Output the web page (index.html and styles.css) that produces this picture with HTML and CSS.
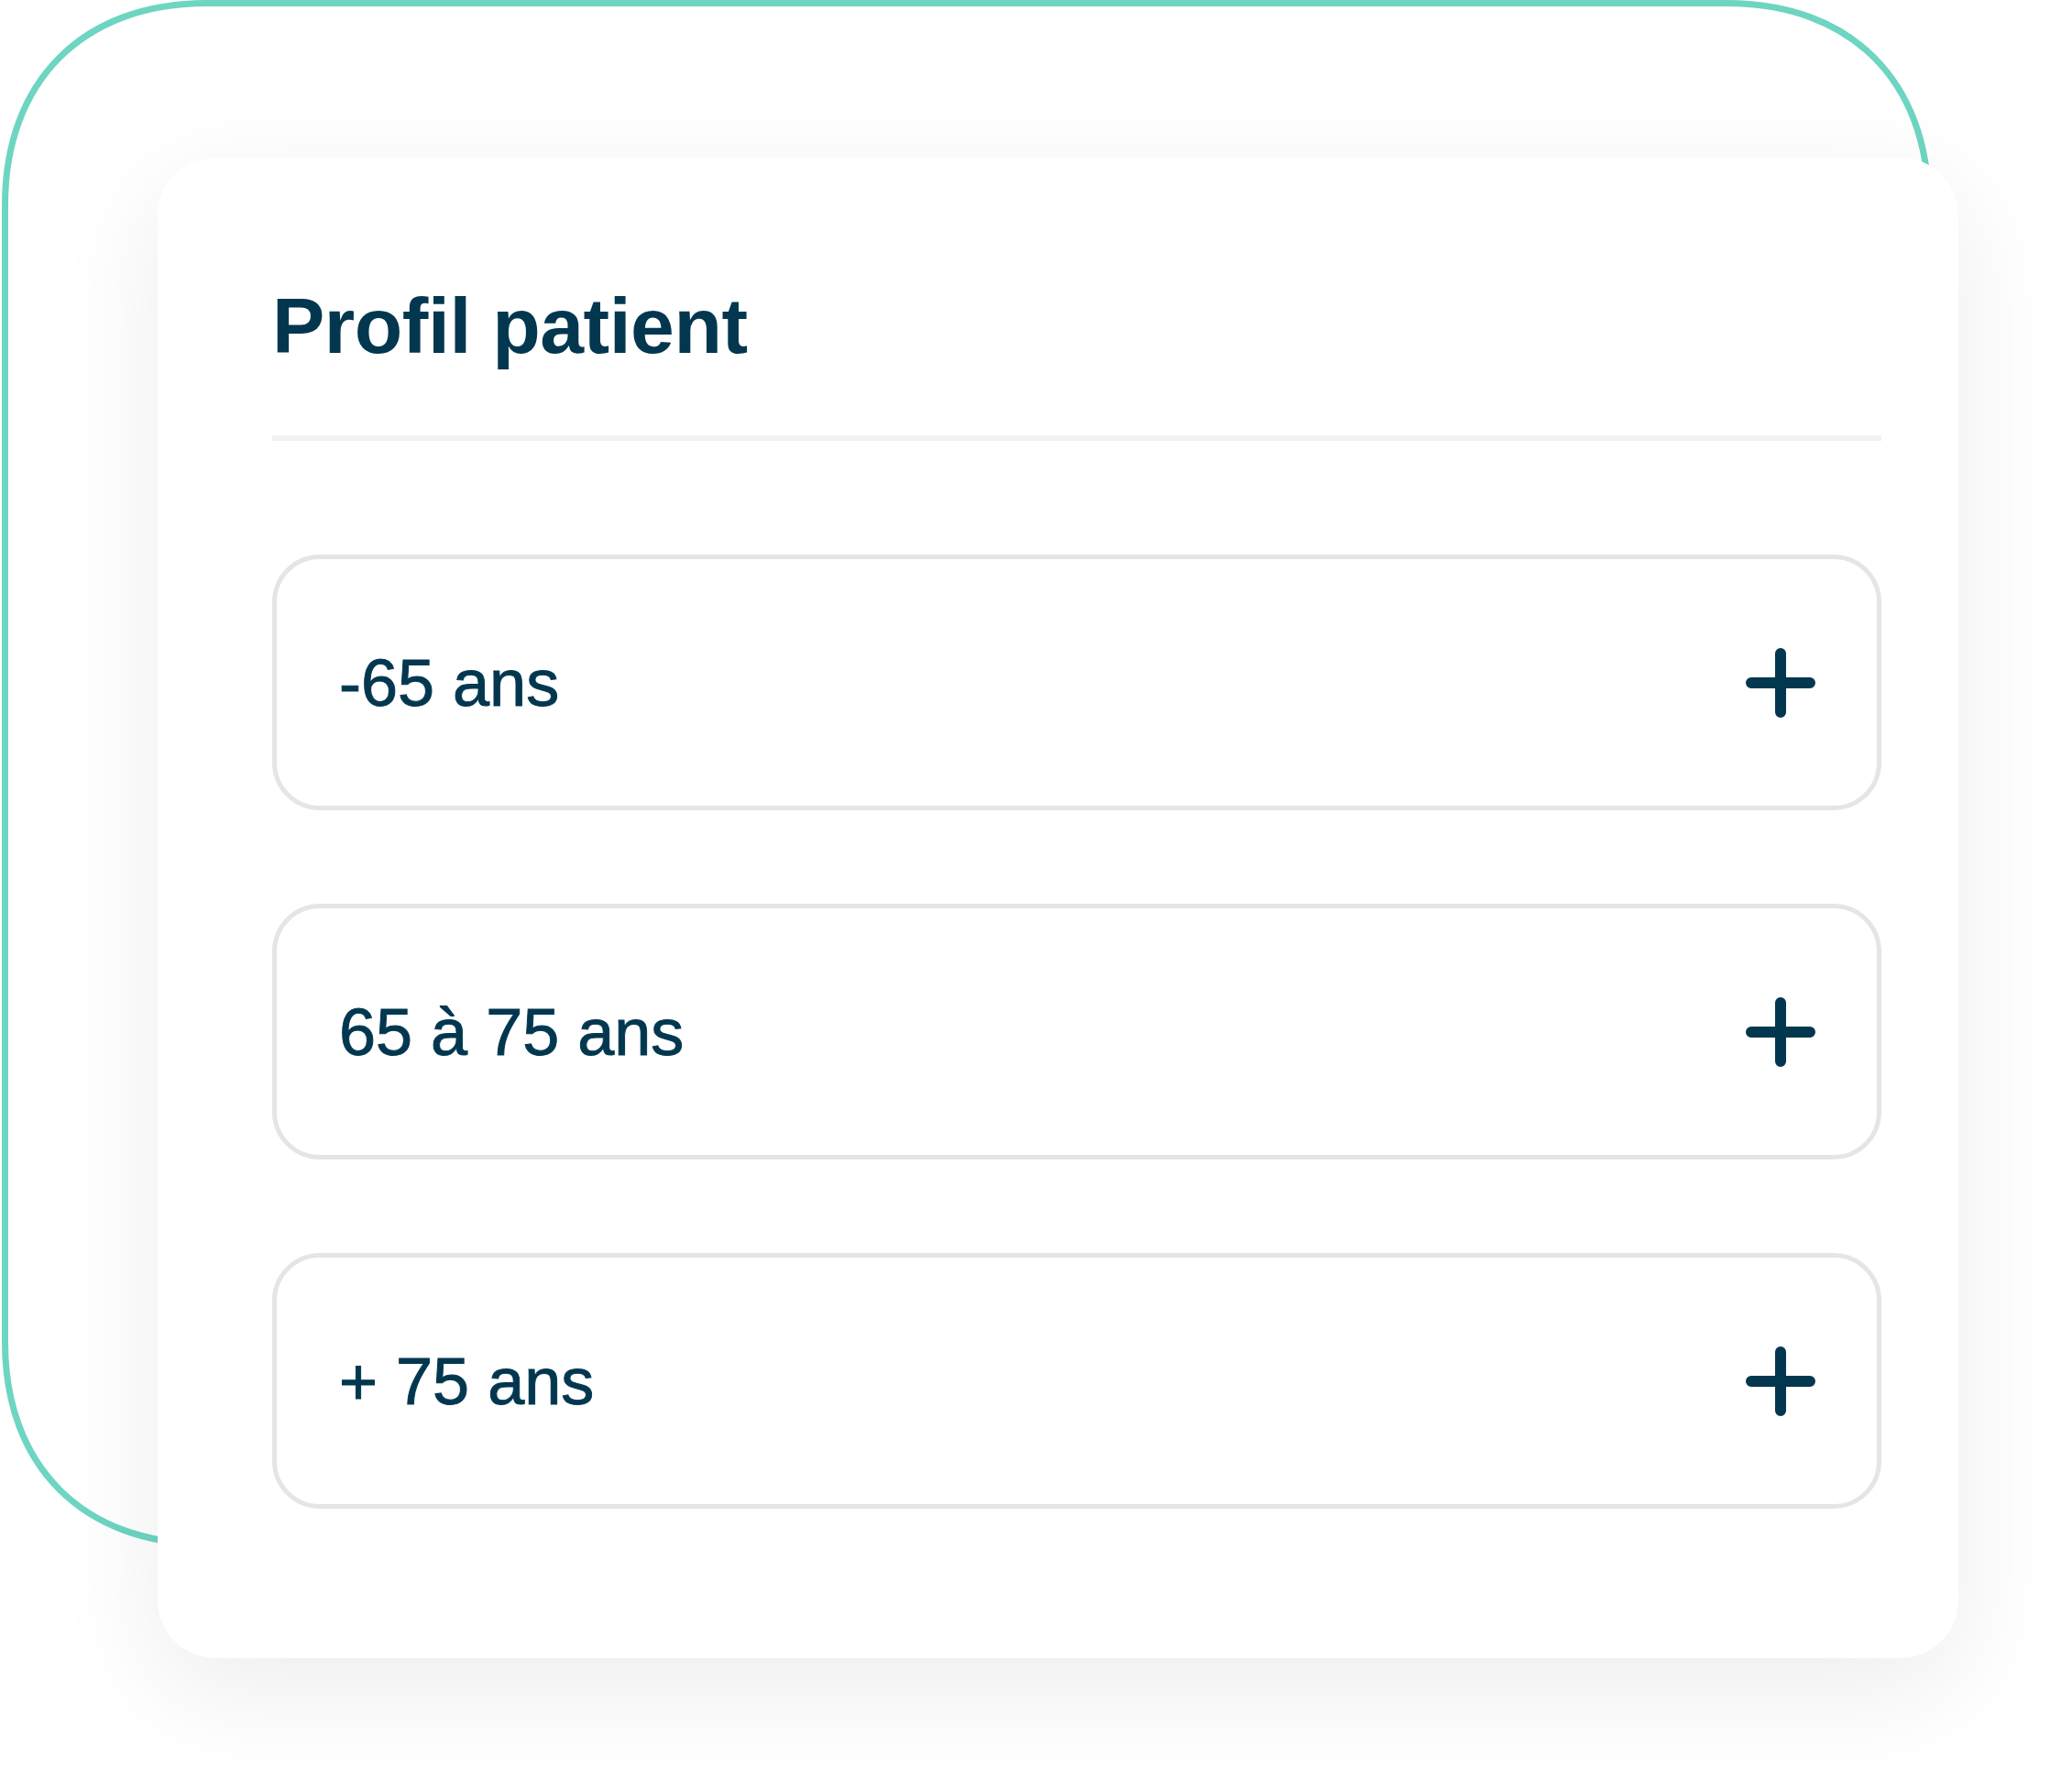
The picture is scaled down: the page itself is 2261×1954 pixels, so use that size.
FILE: index.html
```html
<!DOCTYPE html>
<html lang="fr">
<head>
<meta charset="utf-8">
<title>Profil patient</title>
<link rel="stylesheet" href="styles.css">
</head>
<body>
<div class="stage">
  <svg class="frame" viewBox="0 0 2106 1688" width="2106" height="1688" aria-hidden="true">
    <path d="M223.5 3.5H1882.5C2017.5 3.5 2102.5 88.5 2102.5 223.5V1464.5C2102.5 1599.5 2017.5 1684.5 1882.5 1684.5H223.5C88.5 1684.5 3.5 1599.5 3.5 1464.5V223.5C3.5 88.5 88.5 3.5 223.5 3.5Z"/>
  </svg>
  <section class="card">
    <h2 class="title">Profil patient</h2>
    <div class="divider"></div>
    <ul class="options">
      <li class="option">
        <span class="label">-65 ans</span>
        <svg class="plus" viewBox="0 0 76 76" width="76" height="76" aria-hidden="true"><path d="M38 6V70M6 38H70"/></svg>
      </li>
      <li class="option">
        <span class="label">65 à 75 ans</span>
        <svg class="plus" viewBox="0 0 76 76" width="76" height="76" aria-hidden="true"><path d="M38 6V70M6 38H70"/></svg>
      </li>
      <li class="option">
        <span class="label">+ 75 ans</span>
        <svg class="plus" viewBox="0 0 76 76" width="76" height="76" aria-hidden="true"><path d="M38 6V70M6 38H70"/></svg>
      </li>
    </ul>
  </section>
</div>
</body>
</html>
```

FILE: styles.css
```css
html, body {
  margin: 0;
  padding: 0;
  background: #ffffff;
}

body {
  font-family: "Liberation Sans", Arial, sans-serif;
  color: #03374f;
}

.stage {
  position: relative;
  width: 2261px;
  height: 1954px;
  overflow: hidden;
  padding: 172px 0 0 172px;
  box-sizing: border-box;
}

.frame {
  position: absolute;
  left: 2px;
  top: 0;
  display: block;
  z-index: 0;
}

.frame path {
  fill: none;
  stroke: #6dd5c2;
  stroke-width: 7;
}

.card {
  position: relative;
  z-index: 1;
  width: 1965px;
  height: 1637px;
  box-sizing: border-box;
  padding: 140px 84px 163px 125px;
  background: #ffffff;
  border-radius: 63px;
  box-shadow: 0 34px 120px rgba(0, 0, 0, 0.075);
}

.title {
  margin: 0;
  font-size: 86px;
  line-height: 86px;
  font-weight: 700;
  letter-spacing: -0.5px;
  color: #03374f;
}

.divider {
  margin-top: 77px;
  height: 6px;
  background: #f2f2f2;
}

.options {
  list-style: none;
  margin: 124px 0 0 0;
  padding: 0;
  display: flex;
  flex-direction: column;
  gap: 102px;
}

.option {
  height: 279px;
  box-sizing: border-box;
  border: 5px solid #e5e5e5;
  border-radius: 52px;
  display: flex;
  align-items: center;
  justify-content: space-between;
  padding: 0 67px 0 68px;
}

.label {
  font-size: 72px;
  line-height: 72px;
  font-weight: 400;
  color: #03374f;
  -webkit-text-stroke: 1px #03374f;
}

.plus {
  display: block;
  flex: none;
}

.plus path {
  fill: none;
  stroke: #03374f;
  stroke-width: 12;
  stroke-linecap: round;
}
```
